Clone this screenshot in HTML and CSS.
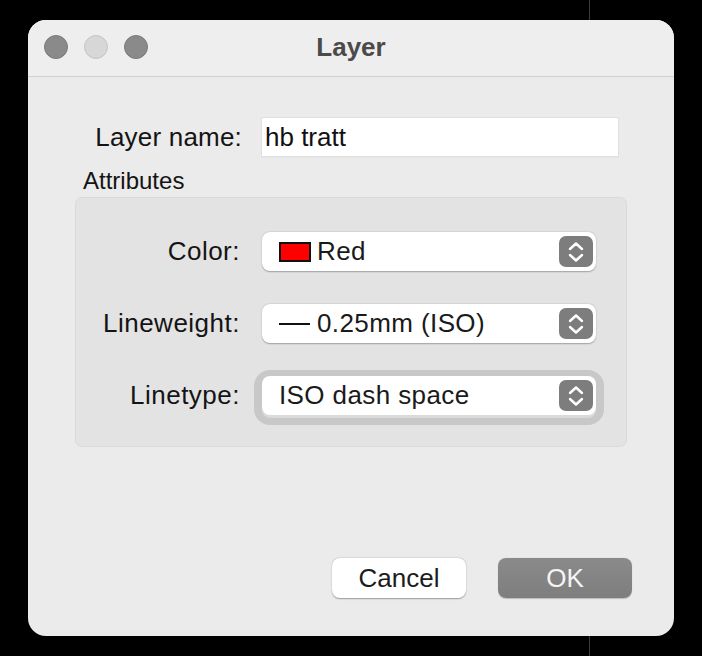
FILE: index.html
```html
<!DOCTYPE html>
<html>
<head>
<meta charset="utf-8">
<link rel="stylesheet" href="styles.css">
</head>
<body>
<div class="window">
  <div class="titlebar">
    <div class="lights">
      <span class="light dark"></span>
      <span class="light pale"></span>
      <span class="light dark"></span>
    </div>
    <div class="title">Layer</div>
  </div>
  <div class="content">
    <div class="name-row">
      <label class="label">Layer name:</label>
      <div class="input">hb tratt</div>
    </div>
    <div class="section-title">Attributes</div>
    <div class="group">
      <div class="row">
        <span class="label glabel">Color:</span>
        <div class="popup">
          <span class="swatch"></span>
          <span class="ptext">Red</span>
          <span class="stepper"><svg width="18" height="24" viewBox="0 0 18 24"><path d="M3 9 L9 3.5 L15 9 M3 15 L9 20.5 L15 15" fill="none" stroke="#fff" stroke-width="2.4" stroke-linecap="round" stroke-linejoin="round"/></svg></span>
        </div>
      </div>
      <div class="row">
        <span class="label glabel">Lineweight:</span>
        <div class="popup">
          <span class="lineglyph"></span>
          <span class="ptext">0.25mm (ISO)</span>
          <span class="stepper"><svg width="18" height="24" viewBox="0 0 18 24"><path d="M3 9 L9 3.5 L15 9 M3 15 L9 20.5 L15 15" fill="none" stroke="#fff" stroke-width="2.4" stroke-linecap="round" stroke-linejoin="round"/></svg></span>
        </div>
      </div>
      <div class="row">
        <span class="label glabel">Linetype:</span>
        <div class="popup focused">
          <span class="ptext">ISO dash space</span>
          <span class="stepper"><svg width="18" height="24" viewBox="0 0 18 24"><path d="M3 9 L9 3.5 L15 9 M3 15 L9 20.5 L15 15" fill="none" stroke="#fff" stroke-width="2.4" stroke-linecap="round" stroke-linejoin="round"/></svg></span>
        </div>
      </div>
    </div>
    <div class="spacer"></div>
    <div class="buttons">
      <div class="btn cancel">Cancel</div>
      <div class="btn ok">OK</div>
    </div>
  </div>
</div>
</body>
</html>
```

FILE: styles.css
```css
html, body {
  margin: 0;
  padding: 0;
}
body {
  width: 702px;
  height: 656px;
  overflow: hidden;
  background: linear-gradient(to right, transparent 589px, #3c3c3c 589px, #3c3c3c 590px, transparent 590px), #000;
  font-family: "Liberation Sans", Arial, sans-serif;
  color: #1c1c1c;
  padding-top: 20px;
  padding-left: 28px;
  box-sizing: border-box;
}
.window {
  width: 646px;
  height: 616px;
  border-radius: 18px;
  overflow: hidden;
  background: #ebebeb;
  display: flex;
  flex-direction: column;
}
.titlebar {
  height: 56px;
  flex: none;
  background: #eeeeee;
  border-bottom: 1px solid #d0d0d0;
  position: relative;
  display: flex;
  align-items: center;
  justify-content: center;
}
.lights {
  position: absolute;
  left: 16px;
  top: 15px;
  display: flex;
  gap: 16px;
}
.light {
  width: 24px;
  height: 24px;
  border-radius: 50%;
  box-sizing: border-box;
}
.light.dark {
  background: #8a8a8a;
  border: 1px solid #7a7a7a;
}
.light.pale {
  background: #d7d7d7;
  border: 1px solid #c4c4c4;
}
.title {
  font-size: 26px;
  font-weight: bold;
  color: #4a4a4a;
  margin-top: -2px;
}
.content {
  flex: 1;
  display: flex;
  flex-direction: column;
}
.name-row {
  display: grid;
  grid-template-columns: 214px 356px;
  column-gap: 20px;
  align-items: center;
  margin-top: 41px;
}
.label {
  font-size: 26px;
  text-align: right;
  color: #141414;
  letter-spacing: 0.2px;
}
.glabel {
  letter-spacing: 0.5px;
}
.input {
  height: 38px;
  background: #fff;
  box-shadow: 0 0 0 1px #e0e0e0, 0 1px 1px rgba(0,0,0,0.15);
  font-size: 26px;
  line-height: 38px;
  padding-left: 3px;
  box-sizing: border-box;
  color: #111;
}
.section-title {
  font-size: 24px;
  margin: 10px 0 0 55px;
  line-height: 30px;
  color: #141414;
}
.group {
  margin: 1px 0 0 47px;
  width: 552px;
  height: 250px;
  box-sizing: border-box;
  background: #e3e3e3;
  border: 1px solid #dadada;
  border-radius: 7px;
  padding-top: 34px;
  display: flex;
  flex-direction: column;
  gap: 33px;
}
.row {
  display: grid;
  grid-template-columns: 164px 334px;
  column-gap: 22px;
  align-items: center;
}
.popup {
  height: 39px;
  background: #fff;
  border-radius: 8px;
  box-shadow: 0 0.5px 1.5px rgba(0,0,0,0.3);
  display: flex;
  align-items: center;
  padding-left: 17px;
  padding-right: 3px;
  box-sizing: border-box;
}
.popup.focused {
  box-shadow: 0 3px 0 0 #dadada, 0 2px 0 8px #c8c8c8;
}
.swatch {
  width: 32px;
  height: 20px;
  box-sizing: border-box;
  background: #ff0000;
  border: 2px solid #111;
  margin-right: 6px;
}
.lineglyph {
  width: 31px;
  height: 2px;
  background: #111;
  margin-right: 7px;
}
.ptext {
  font-size: 26px;
  flex: 1;
  color: #1a1a1a;
  letter-spacing: 0.4px;
}
.stepper {
  width: 34px;
  height: 31px;
  border-radius: 7px;
  background: #7d7d7d;
  display: flex;
  align-items: center;
  justify-content: center;
}
.spacer {
  flex: 1;
}
.buttons {
  display: flex;
  justify-content: flex-end;
  gap: 32px;
  padding-right: 42px;
  padding-bottom: 38px;
}
.btn {
  width: 134px;
  height: 40px;
  border-radius: 8px;
  font-size: 26px;
  line-height: 40px;
  text-align: center;
}
.cancel {
  background: #fff;
  box-shadow: 0 0.5px 1.5px rgba(0,0,0,0.35);
  color: #1c1c1c;
}
.ok {
  background: linear-gradient(#8a8a8a, #7e7e7e);
  color: #f5f5f5;
  box-shadow: 0 0.5px 1px rgba(0,0,0,0.2);
}
```
